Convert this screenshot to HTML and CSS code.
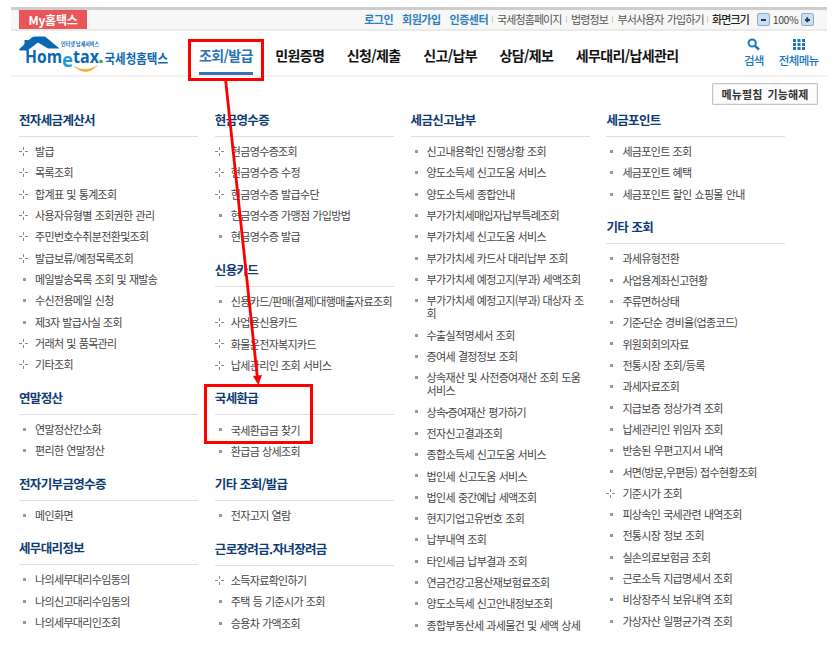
FILE: index.html
```html
<!DOCTYPE html>
<html lang="ko">
<head>
    <meta charset="UTF-8">
    <meta name="viewport" content="width=device-width, initial-scale=1.0">
    <title>국세청 홈택스</title>
    <link rel="stylesheet" href="styles.css">
</head>
<body>
    <div class="page">
        <div class="topbar">
            <a class="my">My홈택스</a>
            <div class="util">
                <a class="member">로그인</a>
                <a class="member">회원가입</a>
                <a class="member">인증센터</a>
                <a class="link">국세청홈페이지</a>
                <a class="link">법령정보</a>
                <a class="link">부서사용자 가입하기</a>
                <span class="link dark">화면크기</span>
                <button class="zoom minus"></button>
                <span class="percent">100%</span>
                <button class="zoom plus"></button>
            </div>
        </div>
        <div class="header">
            <svg class="logo" width="152" height="40" viewBox="0 0 152 40">
                <path d="M0 13.500 L12 2 Q13.500 .5 16 .5 H26 L40.500 12.500 H29 L19 6.500 L8.500 14.500 H1 Z" fill="#0c68b3"/>
                <rect x="5.500" y="4" width="4" height="6" fill="#0c68b3"/>
                <text class="logo-sub" x="42" y="10" textLength="38" lengthAdjust="spacingAndGlyphs">인터넷 납세서비스</text>
                <text class="logo-en" x="6" y="27" textLength="37" lengthAdjust="spacingAndGlyphs">Hom</text>
                <text class="logo-e" x="43" y="31" textLength="11" lengthAdjust="spacingAndGlyphs">e</text>
                <text class="logo-en" x="54" y="27" textLength="26" lengthAdjust="spacingAndGlyphs">tax</text>
                <rect x="80.500" y="24" width="3" height="3" fill="#35a845"/>
                <path d="M55 30.500 Q67 37 78 29.500 Q68 41 55 30.500" fill="#f8a928" stroke="#f8a928" stroke-width=".5"/>
                <text class="logo-ko" x="85.500" y="26.500" textLength="63.500" lengthAdjust="spacingAndGlyphs">국세청홈택스</text>
            </svg>
            <div class="nav">
                <a class="active">조회/발급</a>
                <a>민원증명</a>
                <a>신청/제출</a>
                <a>신고/납부</a>
                <a>상담/제보</a>
                <a>세무대리/납세관리</a>
            </div>
            <div class="tools">
                <a>
                    <svg width="14" height="13" viewBox="0 0 14 13"><circle cx="5.200" cy="5" r="3.600" fill="none" stroke="#1878c0" stroke-width="2"/><path d="M8 7.800 L12 11.500" stroke="#1878c0" stroke-width="2.400"/></svg>
                    <span>검색</span>
                </a>
                <a>
                    <svg width="13" height="13" viewBox="0 0 13 13" fill="#1878c0"><path d="M1 1h3v3h-3z M5.500 1h3v3h-3z M10 1h3v3h-3z M1 5h3v3h-3z M5.500 5h3v3h-3z M10 5h3v3h-3z M1 9h3v3h-3z M5.500 9h3v3h-3z M10 9h3v3h-3z"/></svg>
                    <span>전체메뉴</span>
                </a>
            </div>
        </div>
        <div class="fold"><button class="fold-btn">메뉴펼침 기능해제</button></div>
        <div class="menu">
            <div class="col">
                <h3>전자세금계산서</h3>
                <ul>
                    <li class="more">발급</li>
                    <li class="more">목록조회</li>
                    <li class="more">합계표 및 통계조회</li>
                    <li class="more">사용자유형별 조회권한 관리</li>
                    <li class="more">주민번호수취분전환및조회</li>
                    <li class="more">발급보류/예정목록조회</li>
                    <li>메일발송목록 조회 및 재발송</li>
                    <li>수신전용메일 신청</li>
                    <li>제3자 발급사실 조회</li>
                    <li class="more">거래처 및 품목관리</li>
                    <li class="more">기타조회</li>
                </ul>
                <h3>연말정산</h3>
                <ul>
                    <li>연말정산간소화</li>
                    <li>편리한 연말정산</li>
                </ul>
                <h3>전자기부금영수증</h3>
                <ul>
                    <li>메인화면</li>
                </ul>
                <h3>세무대리정보</h3>
                <ul>
                    <li>나의세무대리수임동의</li>
                    <li>나의신고대리수임동의</li>
                    <li>나의세무대리인조회</li>
                </ul>
            </div>
            <div class="col">
                <h3>현금영수증</h3>
                <ul>
                    <li class="more">현금영수증조회</li>
                    <li class="more">현금영수증 수정</li>
                    <li class="more">현금영수증 발급수단</li>
                    <li>현금영수증 가맹점 가입방법</li>
                    <li>현금영수증 발급</li>
                </ul>
                <h3>신용카드</h3>
                <ul>
                    <li>신용카드/판매(결제)대행매출자료조회</li>
                    <li class="more">사업용신용카드</li>
                    <li class="more">화물운전자복지카드</li>
                    <li class="more">납세관리인 조회 서비스</li>
                </ul>
                <h3>국세환급</h3>
                <ul>
                    <li>국세환급금 찾기</li>
                    <li>환급금 상세조회</li>
                </ul>
                <h3>기타 조회/발급</h3>
                <ul>
                    <li>전자고지 열람</li>
                </ul>
                <h3>근로장려금.자녀장려금</h3>
                <ul>
                    <li class="more">소득자료확인하기</li>
                    <li>주택 등 기준시가 조회</li>
                    <li>승용차 가액조회</li>
                </ul>
            </div>
            <div class="col">
                <h3>세금신고납부</h3>
                <ul>
                    <li>신고내용확인 진행상황 조회</li>
                    <li>양도소득세 신고도움 서비스</li>
                    <li>양도소득세 종합안내</li>
                    <li>부가가치세매입자납부특례조회</li>
                    <li>부가가치세 신고도움 서비스</li>
                    <li>부가가치세 카드사 대리납부 조회</li>
                    <li>부가가치세 예정고지(부과) 세액조회</li>
                    <li>부가가치세 예정고지(부과) 대상자 조<br>회</li>
                    <li>수출실적명세서 조회</li>
                    <li>증여세 결정정보 조회</li>
                    <li>상속재산 및 사전증여재산 조회 도움<br>서비스</li>
                    <li>상속<i>·</i>증여재산 평가하기</li>
                    <li>전자신고결과조회</li>
                    <li>종합소득세 신고도움 서비스</li>
                    <li>법인세 신고도움 서비스</li>
                    <li>법인세 중간예납 세액조회</li>
                    <li>현지기업고유번호 조회</li>
                    <li>납부내역 조회</li>
                    <li>타인세금 납부결과 조회</li>
                    <li>연금건강고용산재보험료조회</li>
                    <li>양도소득세 신고안내정보조회</li>
                    <li>종합부동산세 과세물건 및 세액 상세</li>
                </ul>
            </div>
            <div class="col">
                <h3>세금포인트</h3>
                <ul>
                    <li>세금포인트 조회</li>
                    <li>세금포인트 혜택</li>
                    <li>세금포인트 할인 쇼핑몰 안내</li>
                </ul>
                <h3>기타 조회</h3>
                <ul>
                    <li>과세유형전환</li>
                    <li>사업용계좌신고현황</li>
                    <li>주류면허상태</li>
                    <li>기준<i>·</i>단순 경비율(업종코드)</li>
                    <li>위원회회의자료</li>
                    <li>전통시장 조회/등록</li>
                    <li>과세자료조회</li>
                    <li>지급보증 정상가격 조회</li>
                    <li>납세관리인 위임자 조회</li>
                    <li>반송된 우편고지서 내역</li>
                    <li>서면(방문,우편등) 접수현황조회</li>
                    <li class="more">기준시가 조회</li>
                    <li>피상속인 국세관련 내역조회</li>
                    <li>전통시장 정보 조회</li>
                    <li>실손의료보험금 조회</li>
                    <li>근로소득 지급명세서 조회</li>
                    <li>비상장주식 보유내역 조회</li>
                    <li>가상자산 일평균가격 조회</li>
                </ul>
            </div>
        </div>
        <!-- red guide: menu tab -> refund section -->
        <svg class="guide" width="838" height="645" viewBox="0 0 838 645">
            <g fill="none" stroke="#ff0000">
                <rect x="189.500" y="40.500" width="73" height="39" stroke-width="3"/>
                <rect x="205.500" y="385.500" width="106" height="57" stroke-width="3"/>
                <path d="M225.700 81 L257.300 377" stroke-width="2.800"/>
            </g>
            <path d="M253 376 L262 375 L258.300 385 Z" fill="#ff0000"/>
        </svg>
    </div>
</body>
</html>
```
FILE: styles.css
```css
* { margin: 0; padding: 0; box-sizing: border-box; }
body { font-family: 'Noto Sans CJK KR', sans-serif; background: #fff; color: #444; width: 838px; height: 645px; overflow: hidden; }
.page { position: relative; width: 838px; height: 645px; padding: 7px 11px 0; overflow: hidden; }
ul { list-style: none; }
i { font-style: normal; }
button { font-family: inherit; }

.topbar { display: flex; justify-content: space-between; height: 24px; padding: 0 13px 0 8px; background: #f7f7f6; border-top: 3px solid #cdcdcd; border-bottom: 2px solid #eaeaea; }
.my { width: 68px; height: 19px; background: #ea5557; color: #fff; font-size: 12px; font-weight: 700; line-height: 19px; text-align: center; letter-spacing: -0.2px; }
.util { display: flex; align-items: center; height: 19px; font-size: 11px; line-height: 19px; letter-spacing: -0.9px; white-space: nowrap; }
.member { color: #2a7fc0; font-weight: 700; letter-spacing: -0.5px; margin-right: 9px; }
.member:nth-child(3) { margin-right: 4px; }
.link { display: flex; align-items: center; margin-right: 4.5px; color: #555; word-spacing: 1px; }
.link::before { content: ""; width: 1px; height: 7px; margin-right: 4px; background: #ccc; }
.link:nth-child(6) { margin-right: 3.5px; }
.dark { color: #222; margin-right: 8px; font-weight: 500; letter-spacing: -0.9px; }
.zoom { position: relative; width: 13px; height: 13px; border: 1px solid #8eabc9; border-radius: 2px; background: #c9dff3; }
.zoom::before, .plus::after { content: ""; position: absolute; left: 3px; top: 5px; width: 5px; height: 1.5px; background: #24405f; }
.plus::after { transform: rotate(90deg); }
.percent { width: 31px; font-size: 10.5px; text-align: center; letter-spacing: -0.4px; }

.header { display: flex; height: 46px; padding-left: 8px; border-bottom: 2px solid #f3f3f3; }
.logo { flex: none; margin-top: 5px; overflow: visible; }
.logo text { fill: #0c68b3; font-weight: 700; }
.logo-sub { font-size: 5.5px; }
.logo-en { font-family: 'Open Sans', sans-serif; font-size: 18.5px; }
.logo .logo-e { font-family: 'Open Sans', sans-serif; font-size: 19px; fill: #1c9ad8; }
.logo-ko { font-size: 13px; }
.nav { display: flex; gap: 22.6px; margin-left: 28px; height: 44px; }
.nav a { height: 44px; color: #111; font-size: 14px; font-weight: 700; line-height: 49px; letter-spacing: -0.65px; white-space: nowrap; }
.nav .active { color: #2a72b8; border-bottom: 3px solid #3a70b5; }
.tools { display: flex; gap: 15px; margin-left: auto; padding: 7px 8.5px 0 0; }
.tools a { display: flex; flex-direction: column; align-items: center; color: #1878c0; font-size: 11.5px; font-weight: 500; line-height: 16px; letter-spacing: -0.65px; white-space: nowrap; }
.tools span { margin-top: 1px; }

.fold { display: flex; justify-content: flex-end; padding: 6px 9px 0 0; height: 33px; }
.fold-btn { width: 106px; height: 22px; border: 1px solid #c4c4c4; border-radius: 1px; background: #fcfcfc; box-shadow: inset 0 0 0 1px #eee; color: #333; font-size: 11px; font-weight: 700; line-height: 18px; letter-spacing: 0.1px; word-spacing: 2px; }

.menu { display: grid; grid-template-columns: repeat(4, 179px); column-gap: 16.8px; padding-left: 8px; }
.col h3 { height: 27px; margin-bottom: 4px; border-bottom: 1px solid #dedede; color: #0d3a74; font-size: 12.5px; font-weight: 700; line-height: 20px; letter-spacing: -0.65px; word-spacing: 0.5px; }
.col ul { margin-bottom: 12.3px; }
.col li { position: relative; padding: 4.17px 0 4.17px 16px; font-size: 11px; line-height: 13px; letter-spacing: -0.66px; word-spacing: 0.5px; white-space: nowrap; }
.col li::before { content: ""; position: absolute; left: 4px; top: 9px; width: 3px; height: 3px; background: #999; }
.col li i { margin: 0 -0.5px; font-weight: 700; }
/* cross marker with an open centre */
.col li.more::before { left: 0; top: 6px; width: 9px; height: 9px; background: linear-gradient(#888, #888) 4px 0 / 1px 3px, linear-gradient(#888, #888) 4px 6px / 1px 3px, linear-gradient(#888, #888) 0 4px / 3px 1px, linear-gradient(#888, #888) 6px 4px / 3px 1px; background-repeat: no-repeat; }

.guide { position: absolute; left: 0; top: 0; }
```
